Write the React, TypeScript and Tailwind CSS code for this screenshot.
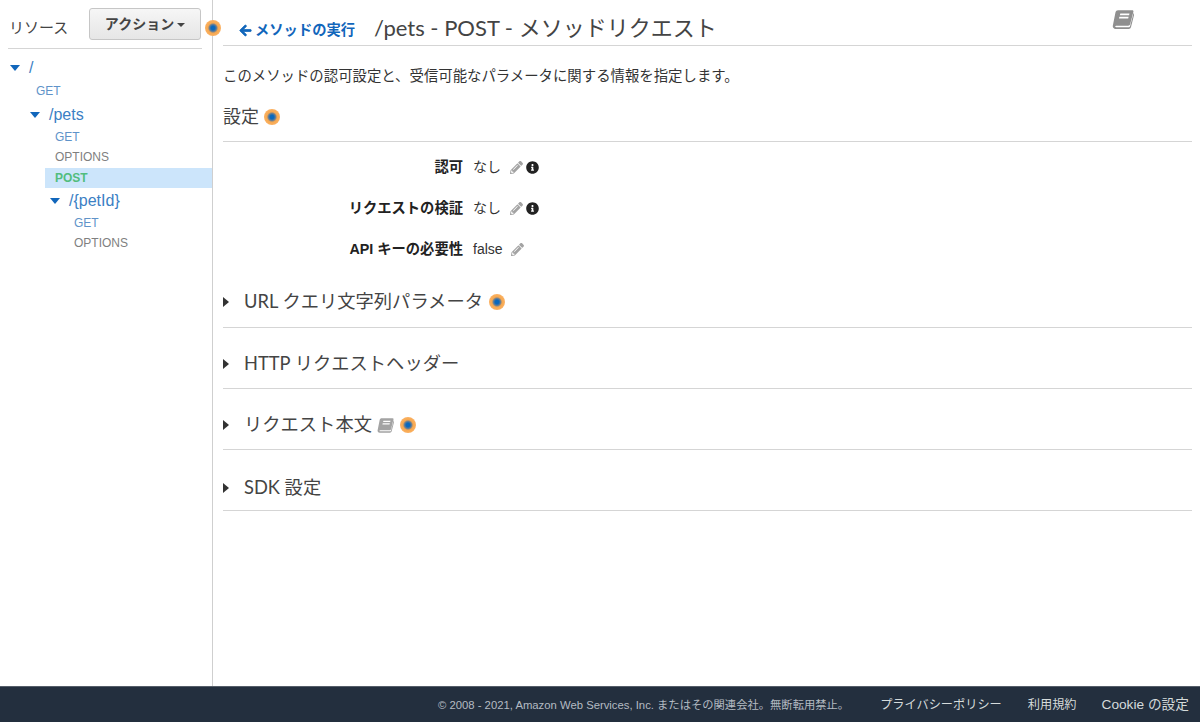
import { FaArrowLeft, FaInfoCircle, FaPencilAlt } from "react-icons/fa";

const sans = "font-['Liberation_Sans','Noto_Sans_CJK_JP',sans-serif]";
const lato = "font-['Lato','Noto_Sans_CJK_JP',sans-serif]";

function Pulse({ className = "" }: { className?: string }) {
  return (
    <span
      className={`inline-block size-[16px] shrink-0 rounded-full bg-[radial-gradient(circle_closest-side,#0a68bd_0%,#0a68bd_24%,#6f7f90_46%,#f6a850_64%,#fbb162_100%)] ${className}`}
    />
  );
}

function Book({ className = "" }: { className?: string }) {
  return (
    <svg viewBox="0 0 22 20" className={className} fill="currentColor">
      <path d="M6 1.2h14.2c.9 0 1.4.7 1.2 1.5l-3.2 12.4c-.3 1.1-1 1.6-2 1.6H4.2c-.9 0-1.2.7-.9 1.1.2.3.6.4 1.1.4h12.4c.6 0 1-.3 1.2-.8l3.5-13.2.9.6-3.4 13.2c-.3 1.2-1.2 1.9-2.3 1.9H3.4c-1.6 0-2.9-1.3-2.6-3.1L3.5 3.3C3.8 2 4.8 1.2 6 1.2z" />
      <path d="M8.3 4.6h9.2l-.4 1.6H7.9zM7.4 7.8h9.2l-.4 1.6H7z" fill="#fff" />
    </svg>
  );
}

function Method({ name, className, tone }: { name: string; className: string; tone: string }) {
  return <div className={`h-[20px] text-[12px] leading-[20px] ${className} ${tone}`}>{name}</div>;
}

function Resource({ path, className }: { path: string; className: string }) {
  return (
    <div className={`flex h-[22px] items-center text-[16px] text-[#3b80c4] ${className}`}>
      <span className="size-0 border-x-[5px] border-t-[6px] border-x-transparent border-t-[#1166bb]" />
      <span className="ml-[9px]">{path}</span>
    </div>
  );
}

function Setting({ label, value, info }: { label: string; value: string; info?: boolean }) {
  return (
    <div className="flex h-[41px] items-center text-[14px]">
      <div className="w-[240px] text-right text-[14.3px] font-bold text-[#222]">{label}</div>
      <div className="ml-[10px] text-[#333]">{value}</div>
      <FaPencilAlt className={`text-[13px] text-[#a3a3a3] ${info ? "ml-[9px]" : "ml-[8px]"}`} />
      {info && <FaInfoCircle className="ml-[3px] text-[13px] text-[#222]" />}
    </div>
  );
}

function Section({ children, className }: { children: React.ReactNode; className: string }) {
  return (
    <div className={`flex h-[61px] items-center border-b border-[#d5d5d5] text-[18.3px] text-[#444] ${lato} ${className}`}>
      <span className="size-0 border-y-[5px] border-l-[6px] border-y-transparent border-l-[#333]" />
      <div className="ml-[15px] flex items-center">{children}</div>
    </div>
  );
}

export default function App() {
  return (
    <div className={`flex h-[722px] flex-col overflow-hidden bg-white ${sans}`}>
      <div className="flex min-h-0 flex-1">
        <aside className="relative w-[213px] shrink-0 border-r border-[#cfcfcf]">
          <div className="mx-[8px] flex h-[49px] w-[194px] items-start border-b border-[#d5d5d5]">
            <span className="mt-[18px] ml-px text-[15px] leading-[20px] text-[#444]">リソース</span>
            <button className="mt-[8px] mr-px ml-auto flex h-[32px] w-[112px] items-center justify-center rounded-[3px] border border-[#c6c6c6] bg-gradient-to-b from-[#f6f6f6] to-[#e6e6e6] text-[14px] font-bold text-[#444]">
              アクション
              <span className="mt-[2px] ml-[3px] size-0 border-x-[4px] border-t-[4px] border-x-transparent border-t-[#444]" />
            </button>
          </div>
          <Pulse className="absolute top-[20px] left-[205px]" />
          <div className="mt-[8px]">
            <Resource path="/" className="pl-[10px]" />
            <Method name="GET" className="mt-[2px] ml-[36px]" tone="text-[#5f93c9]" />
            <Resource path="/pets" className="mt-[3px] pl-[30px]" />
            <Method name="GET" className="mt-[1px] ml-[55px]" tone="text-[#5f93c9]" />
            <Method name="OPTIONS" className="ml-[55px]" tone="text-[#7f7f7f]" />
            <div className="mt-[1px] ml-[45px] h-[20px] bg-[#cce5fb] pl-[10px] text-[12px] leading-[20px] font-bold text-[#52bd7d]">POST</div>
            <Resource path="/{petId}" className="mt-[2px] pl-[50px]" />
            <Method name="GET" className="mt-[1px] ml-[74px]" tone="text-[#5f93c9]" />
            <Method name="OPTIONS" className="ml-[74px]" tone="text-[#7f7f7f]" />
          </div>
        </aside>

        <main className="min-w-0 flex-1 pr-[8px] pl-[10px]">
          <div className="relative flex h-[46px] items-end border-b border-[#d5d5d5] pb-[2px]">
            <a className="mb-[2px] ml-[16px] flex items-center text-[14.3px] font-bold text-[#1166bb]">
              <FaArrowLeft className="mr-[3px] text-[13px]" stroke="currentColor" strokeWidth={30} />
              メソッドの実行
            </a>
            <h1 className={`ml-[19px] text-[22px] leading-[30px] text-[#444] ${lato}`}>/pets - POST - メソッドリクエスト</h1>
            <Book className="absolute top-[9px] left-[889px] h-[20px] w-[22px] text-[#8f8f8f]" />
          </div>
          <p className="mt-[21px] text-[14.4px] leading-[18px] text-[#333]">
            このメソッドの認可設定と、受信可能なパラメータに関する情報を指定します。
          </p>
          <div className={`mt-[18px] flex items-start border-b border-[#d5d5d5] pb-[12px] text-[18px] text-[#444] ${lato}`}>
            <span className="leading-[26px]">設定</span>
            <Pulse className="mt-[6px] ml-[5px]" />
          </div>
          <div className="mt-[5px]">
            <Setting label="認可" value="なし" info />
            <Setting label="リクエストの検証" value="なし" info />
            <Setting label="API キーの必要性" value="false" />
          </div>
          <div className="mt-[-3px]">
            <Section className="pt-[10px]">
              URL クエリ文字列パラメータ
              <Pulse className="ml-[6px]" />
            </Section>
            <Section className="pt-[12px]">HTTP リクエストヘッダー</Section>
            <Section className="pt-[12px]">
              リクエスト本文
              <Book className="ml-[5px] h-[16px] w-[17px] text-[#a3a3a3]" />
              <Pulse className="ml-[6px]" />
            </Section>
            <Section className="pt-[16px]">SDK 設定</Section>
          </div>
        </main>
      </div>

      <footer className="flex h-[36px] shrink-0 items-center justify-end border-t border-[#555e69] bg-[#232f3e] pt-px pr-[11px] text-[12.2px] text-[#d5dbdb]">
        <span className="text-[11.3px] text-[#b4bbc2]">© 2008 - 2021, Amazon Web Services, Inc. またはその関連会社。無断転用禁止。</span>
        <a className="ml-[31px]">プライバシーポリシー</a>
        <a className="ml-[26px]">利用規約</a>
        <a className="ml-[25px] text-[13.7px]">Cookie の設定</a>
      </footer>
    </div>
  );
}
